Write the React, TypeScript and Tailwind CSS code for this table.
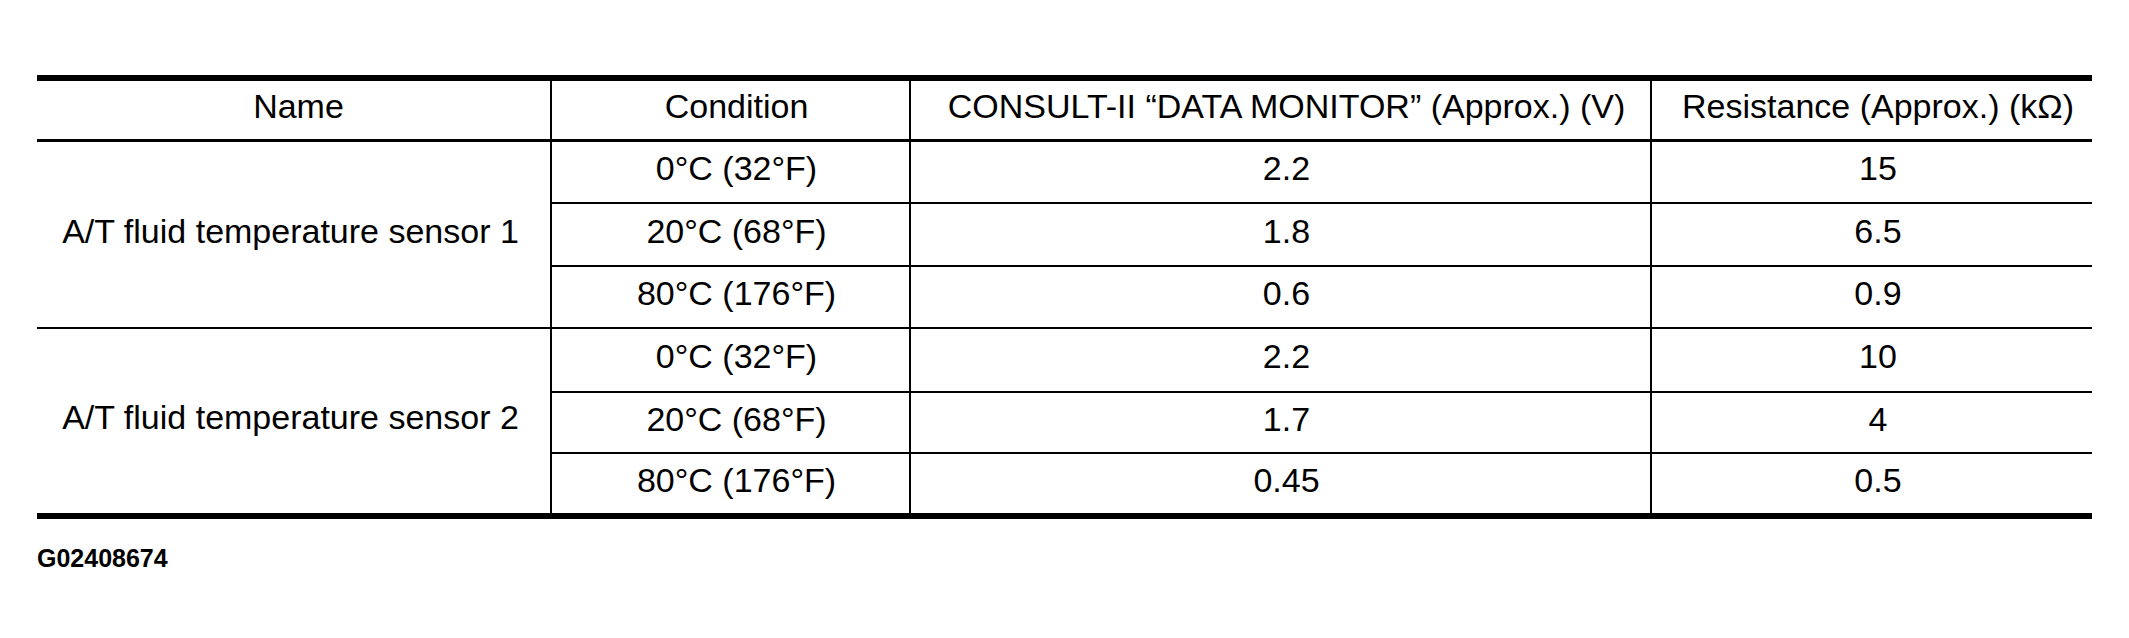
import React from "react";

type Row = { cond: string; v: string; r: string; h: string };

const groups: { name: string; rows: Row[] }[] = [
  {
    name: "A/T fluid temperature sensor 1",
    rows: [
      { cond: "0°C (32°F)", v: "2.2", r: "15", h: "h-[60px]" },
      { cond: "20°C (68°F)", v: "1.8", r: "6.5", h: "h-[63px]" },
      { cond: "80°C (176°F)", v: "0.6", r: "0.9", h: "h-[62px]" },
    ],
  },
  {
    name: "A/T fluid temperature sensor 2",
    rows: [
      { cond: "0°C (32°F)", v: "2.2", r: "10", h: "h-[62px]" },
      { cond: "20°C (68°F)", v: "1.7", r: "4", h: "h-[61px]" },
      { cond: "80°C (176°F)", v: "0.45", r: "0.5", h: "h-[61px]" },
    ],
  },
];

const cell = "flex items-center justify-center pb-[8px] whitespace-nowrap";

export default function App() {
  return (
    <div
      className="w-[2129px] h-[638px] bg-white text-black overflow-hidden"
      style={{ fontFamily: '"Liberation Sans", Arial, Helvetica, sans-serif' }}
    >
      <div className="pt-[75px] pl-[37px]">
        <div className="w-[2055px] border-t-[6px] border-b-[6px] border-black text-[34px] leading-none">
          {/* header */}
          <div className="grid grid-cols-[513px_359px_741px_442px] h-[61px] border-b-[3px] border-black">
            <div className={`${cell} pl-[10px]`}>Name</div>
            <div className={`${cell} border-l-2 border-black pl-[12px]`}>Condition</div>
            <div className={`${cell} border-l-2 border-black pl-[12px]`}>
              CONSULT-II “DATA MONITOR” (Approx.) (V)
            </div>
            <div className={`${cell} border-l-2 border-black pl-[12px]`}>
              Resistance (Approx.) (kΩ)
            </div>
          </div>
          {groups.map((g, gi) => (
            <div
              key={gi}
              className={`grid grid-cols-[513px_359px_741px_442px] ${
                gi > 0 ? "border-t-2 border-black" : ""
              }`}
            >
              <div className={`${cell} row-span-3 pr-[6px]`}>{g.name}</div>
              {g.rows.map((r, ri) => {
                const top = ri > 0 ? "border-t-2" : "";
                return (
                  <React.Fragment key={ri}>
                    <div className={`${cell} ${r.h} ${top} border-l-2 border-black pl-[12px]`}>
                      {r.cond}
                    </div>
                    <div className={`${cell} ${r.h} ${top} border-l-2 border-black pl-[12px]`}>
                      {r.v}
                    </div>
                    <div className={`${cell} ${r.h} ${top} border-l-2 border-black pl-[12px]`}>
                      {r.r}
                    </div>
                  </React.Fragment>
                );
              })}
            </div>
          ))}
        </div>
        <div className="mt-[21px] text-[25px] font-bold leading-normal">G02408674</div>
      </div>
    </div>
  );
}
